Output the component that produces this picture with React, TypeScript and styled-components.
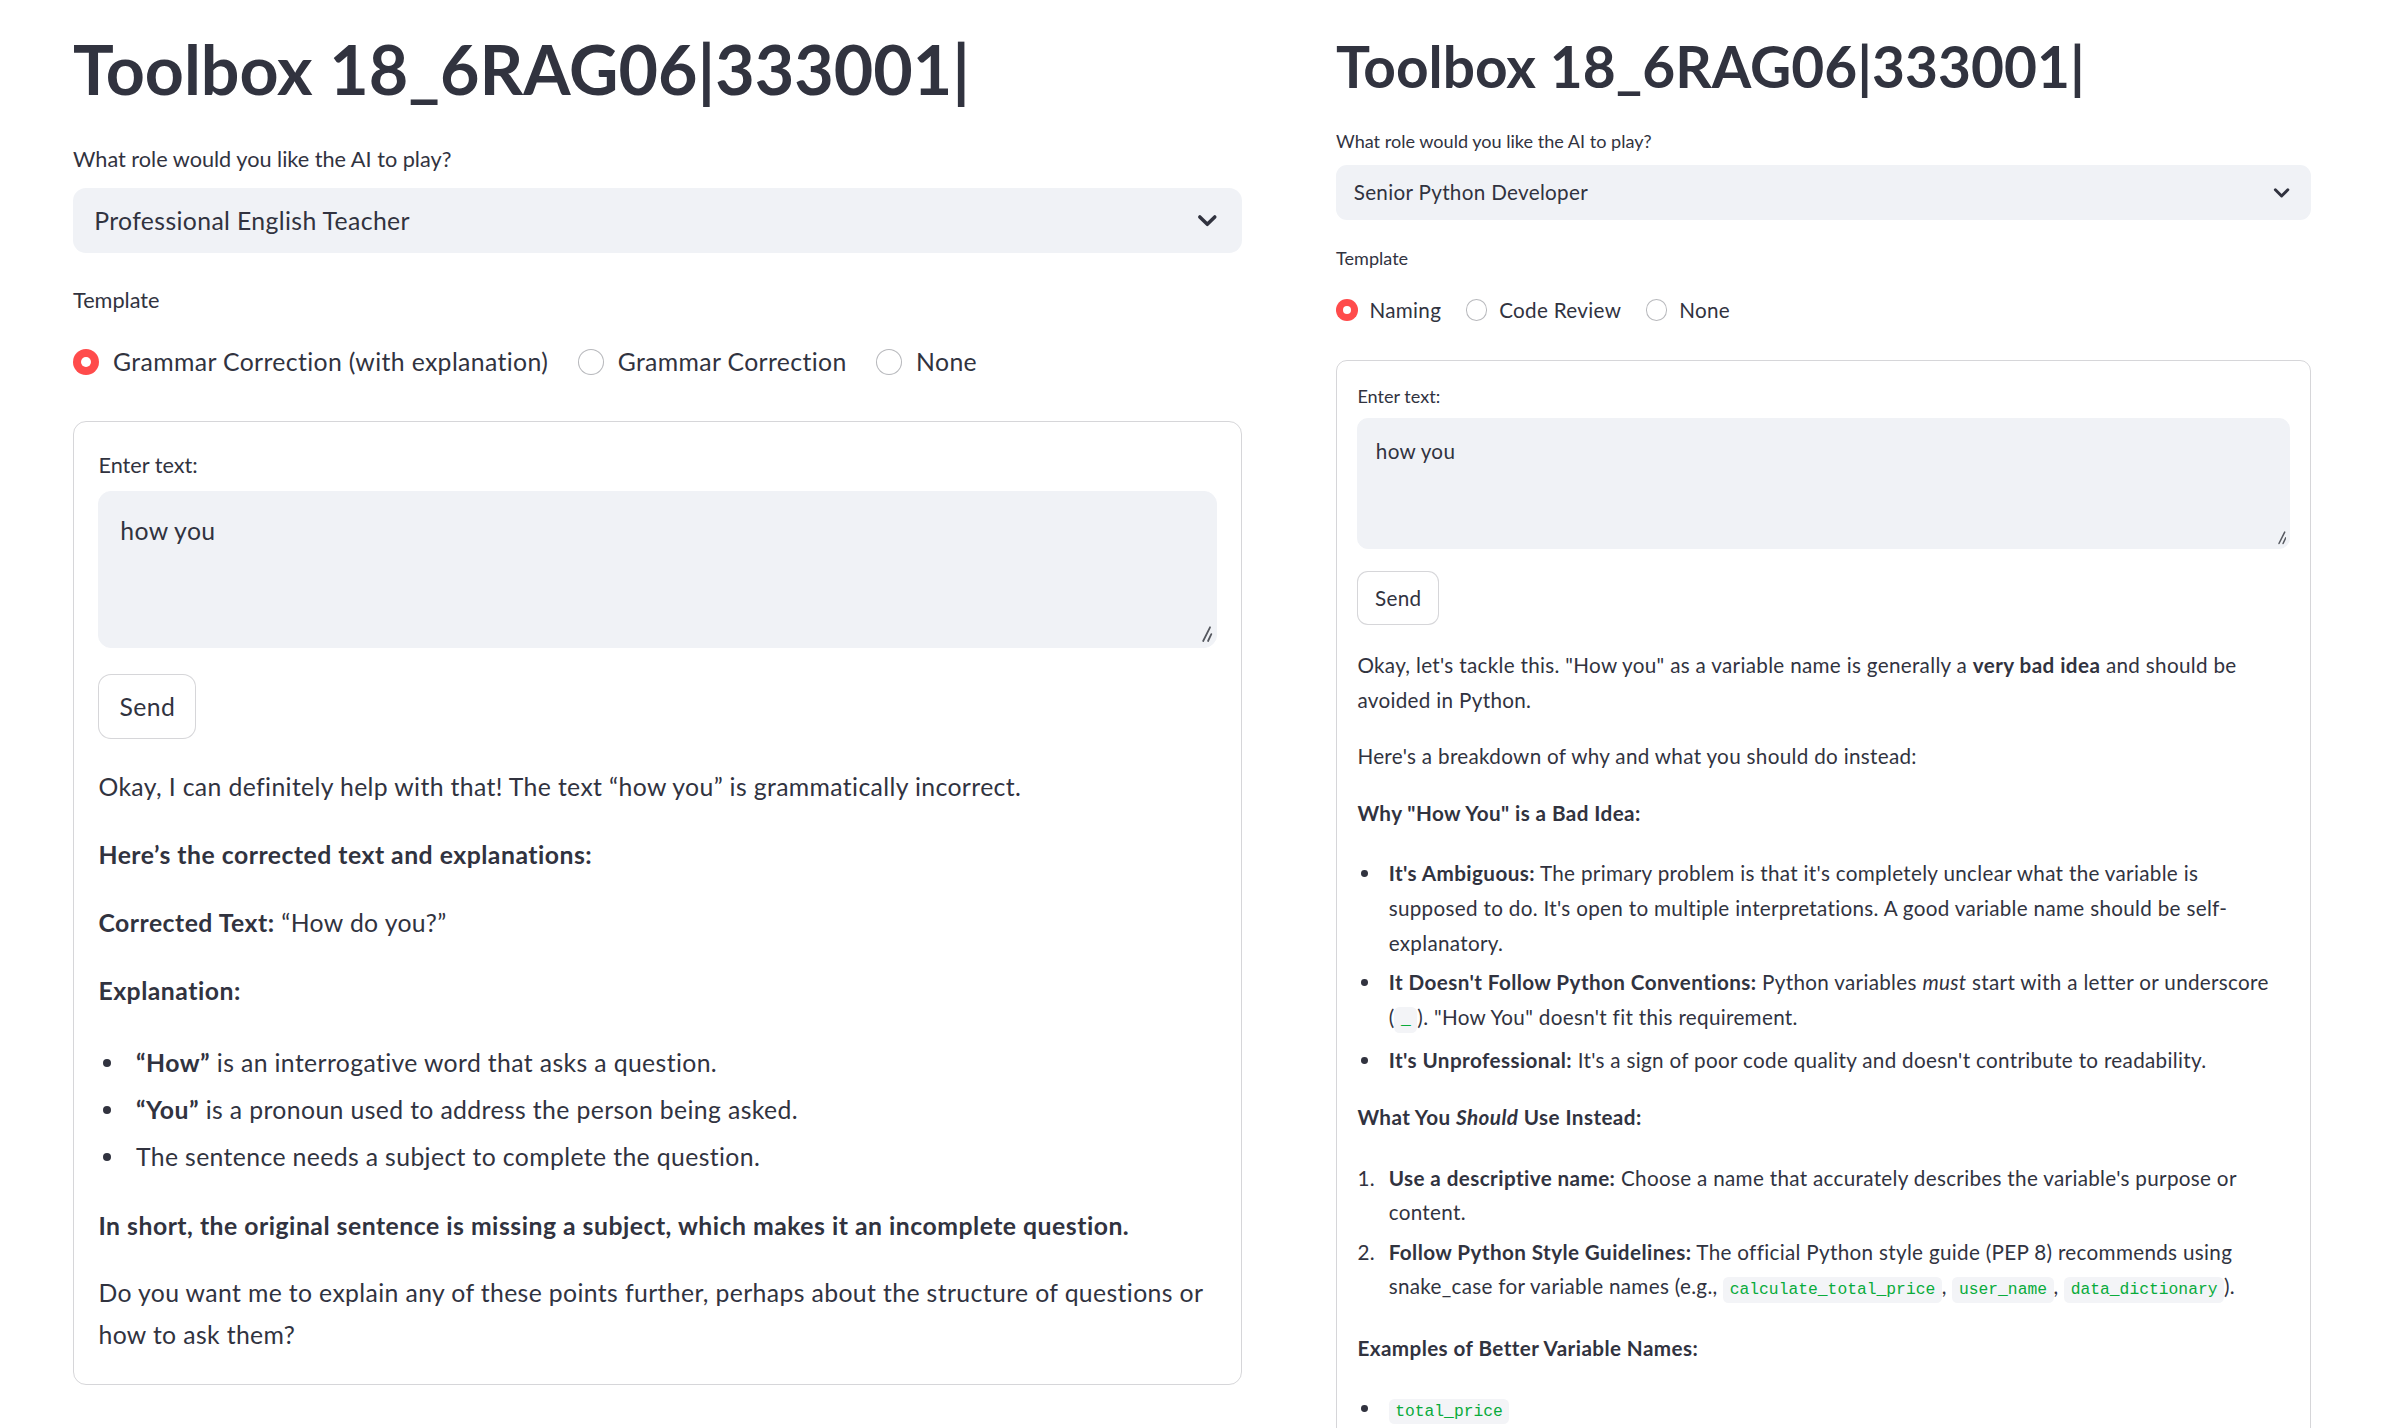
import React from "react";
import styled, { createGlobalStyle, css } from "styled-components";

const FONT = `Lato, "Noto Sans", "Liberation Sans", sans-serif`;
const MONO = `"Liberation Mono", "DejaVu Sans Mono", monospace`;
const INK = "#31333F";
const FS = 0.95; // Lato size factor vs. the original face
const LS = "0.015em";
const LS_BOLD = "0.02em";

type S = { $s: number };
const px = (v: number) => (p: S) => `${(v * p.$s).toFixed(2)}px`;

const Global = createGlobalStyle`
  html, body { margin: 0; padding: 0; background: #fff; overflow: hidden; }
  body { font-family: ${FONT}; color: ${INK}; }
  #root { width: 2398px; height: 1428px; overflow: hidden; }
`;

const Page = styled.main`
  display: flex;
  align-items: flex-start;
  gap: 94px;
  padding-left: 73px;
`;

const Panel = styled.section<S & { $w: number; $top: number }>`
  width: ${(p) => p.$w}px;
  flex: none;
  display: flex;
  flex-direction: column;
  padding-top: ${(p) => (p.$top * p.$s).toFixed(2)}px;
`;

const Title = styled.h1<S>`
  margin: 0;
  font-size: ${px(44 * FS)};
  line-height: ${px(52)};
  font-weight: 700;
  letter-spacing: 0;
  color: ${INK};
  white-space: nowrap;
`;

const FieldLabel = styled.div<S & { $mt: number }>`
  margin-top: ${(p) => (p.$mt * p.$s).toFixed(2)}px;
  font-size: ${px(14 * FS)};
  line-height: ${px(20)};
  color: ${INK};
`;

const Select = styled.div<S>`
  margin-top: ${px(7.3)};
  height: ${px(40)};
  box-sizing: border-box;
  display: flex;
  align-items: center;
  justify-content: space-between;
  padding: 0 ${px(11.5)} 0 ${px(13)};
  background: #f0f2f6;
  border-radius: ${px(8)};
  font-size: ${px(16 * FS)};
  letter-spacing: ${LS};
  color: ${INK};
  svg {
    width: ${px(20)};
    height: ${px(20)};
  }
`;

const RadioGroup = styled.div<S>`
  margin-top: ${px(16)};
  height: ${px(24)};
  display: flex;
  align-items: center;
  gap: ${px(18)};
`;

const RadioItem = styled.label<S>`
  display: flex;
  align-items: center;
  gap: ${px(8.6)};
  font-size: ${px(16 * FS)};
  line-height: ${px(24)};
  letter-spacing: ${LS};
  color: ${INK};
  white-space: nowrap;
`;

const RadioMark = styled.span<S & { $on: boolean }>`
  flex: none;
  box-sizing: border-box;
  width: ${px(16)};
  height: ${px(16)};
  border-radius: 50%;
  display: flex;
  align-items: center;
  justify-content: center;
  ${(p) =>
    p.$on
      ? css`
          background: #ff4b4b;
          &::after {
            content: "";
            width: ${(6 * p.$s).toFixed(2)}px;
            height: ${(6 * p.$s).toFixed(2)}px;
            border-radius: 50%;
            background: #fff;
          }
        `
      : css`
          background: #fff;
          border: 1px solid rgba(49, 51, 63, 0.35);
        `}
`;

const Form = styled.div<S>`
  margin-top: ${px(24.3)};
  border: 1px solid rgba(49, 51, 63, 0.2);
  border-radius: ${px(8)};
  padding: ${px(16.5)} ${px(15)} ${px(17)} ${px(15)};
  display: flex;
  flex-direction: column;
  align-items: stretch;
`;

const TextAreaWrap = styled.div<S>`
  position: relative;
  margin-top: ${px(6)};
`;

const TextArea = styled.textarea<S>`
  display: block;
  box-sizing: border-box;
  width: 100%;
  height: ${px(96)};
  margin: 0;
  padding: ${px(11)} ${px(12.8)};
  background: #f0f2f6;
  border: 1px solid #f0f2f6;
  border-radius: ${px(8)};
  font-family: ${FONT};
  font-size: ${px(16 * FS)};
  line-height: ${px(25.6)};
  letter-spacing: ${LS};
  color: ${INK};
  resize: none;
  outline: none;
`;

const Grip = styled.svg<S>`
  position: absolute;
  right: ${px(2.5)};
  bottom: ${px(3)};
  width: ${px(10)};
  height: ${px(10)};
  pointer-events: none;
`;

const SendButton = styled.button<S>`
  align-self: flex-start;
  margin-top: ${px(16.2)};
  width: ${px(60)};
  height: ${px(40)};
  padding: 0;
  display: flex;
  align-items: center;
  justify-content: center;
  background: #fff;
  border: 1px solid rgba(49, 51, 63, 0.2);
  border-radius: ${px(8)};
  font-family: ${FONT};
  font-size: ${px(16 * FS)};
  letter-spacing: ${LS};
  color: ${INK};
`;

const Markdown = styled.div<S>`
  margin-top: ${px(16.5)};
  font-size: ${px(16 * FS)};
  line-height: ${px(25.6)};
  letter-spacing: ${LS};
  color: ${INK};
  strong {
    font-weight: 700;
    letter-spacing: ${LS_BOLD};
  }
  & > *:last-child {
    margin-bottom: 0;
  }
`;

const P = styled.p<S & { $bold?: boolean }>`
  margin: 0 0 ${px(16)};
  font-weight: ${(p) => (p.$bold ? 700 : 400)};
  letter-spacing: ${(p) => (p.$bold ? LS_BOLD : "inherit")};
`;

const List = styled.ul<S>`
  list-style: none;
  margin: 0 0 ${px(16.6)};
  padding: ${px(2.8)} 0 0;
`;

const Item = styled.li<S>`
  display: grid;
  grid-template-columns: ${px(23)} 1fr;
  margin: 0 0 ${px(3.2)};
`;

const Marker = styled.span<S>`
  height: ${px(25.6)};
  display: flex;
  align-items: center;
`;

const Dot = styled.span<S>`
  width: ${px(5)};
  height: ${px(5)};
  margin-left: ${px(2.5)};
  border-radius: 50%;
  background: ${INK};
`;

const Code = styled.code<S>`
  font-family: ${MONO};
  font-size: ${px(12)};
  color: rgb(9, 171, 59);
  background: #f3f4f7;
  border-radius: ${px(4)};
  padding: ${px(2.4)} ${px(4.8)};
  letter-spacing: 0;
`;

const Chevron = () => (
  <svg viewBox="0 0 24 24" fill="none">
    <path d="M6.5 9.5 12 15l5.5-5.5" stroke={INK} strokeWidth="2.6" strokeLinecap="round" strokeLinejoin="round" />
  </svg>
);

type PanelProps = {
  s: number;
  w: number;
  top: number;
  role: string;
  templates: string[];
  children: React.ReactNode;
};

const ToolboxPanel = ({ s, w, top, role, templates, children }: PanelProps) => (
  <Panel $s={s} $w={w} $top={top}>
    <Title $s={s}>Toolbox 18_6RAG06|333001|</Title>
    <FieldLabel $s={s} $mt={19.4}>What role would you like the AI to play?</FieldLabel>
    <Select $s={s}>
      <span>{role}</span>
      <Chevron />
    </Select>
    <FieldLabel $s={s} $mt={18.7}>Template</FieldLabel>
    <RadioGroup $s={s}>
      {templates.map((t, i) => (
        <RadioItem $s={s} key={t}>
          <RadioMark $s={s} $on={i === 0} />
          {t}
        </RadioItem>
      ))}
    </RadioGroup>
    <Form $s={s}>
      <FieldLabel $s={s} $mt={0}>Enter text:</FieldLabel>
      <TextAreaWrap $s={s}>
        <TextArea $s={s} defaultValue="how you" />
        <Grip $s={s} viewBox="0 0 10 10" fill="none">
          <path d="M8.6 0.8 4.4 9.2M9.4 5 7.4 9.2" stroke="#55585f" strokeWidth="1.1" strokeLinecap="round" />
        </Grip>
      </TextAreaWrap>
      <SendButton $s={s}>Send</SendButton>
      <Markdown $s={s}>{children}</Markdown>
    </Form>
  </Panel>
);

const Bullet = ({ s, children }: { s: number; children: React.ReactNode }) => (
  <Item $s={s}>
    <Marker $s={s}>
      <Dot $s={s} />
    </Marker>
    <span>{children}</span>
  </Item>
);

const Numbered = ({ s, n, children }: { s: number; n: number; children: React.ReactNode }) => (
  <Item $s={s}>
    <span>{n}.</span>
    <span>{children}</span>
  </Item>
);

const L = 1.63;
const R = 1.36;

export default function App() {
  return (
    <>
      <Global />
      <Page>
        <ToolboxPanel
          s={L}
          w={1169}
          top={16.6}
          role="Professional English Teacher"
          templates={["Grammar Correction (with explanation)", "Grammar Correction", "None"]}
        >
          <P $s={L}>Okay, I can definitely help with that! The text “how you” is grammatically incorrect.</P>
          <P $s={L} $bold>Here’s the corrected text and explanations:</P>
          <P $s={L}>
            <strong>Corrected Text:</strong> “How do you?”
          </P>
          <P $s={L} $bold>Explanation:</P>
          <List $s={L}>
            <Bullet s={L}>
              <strong>“How”</strong> is an interrogative word that asks a question.
            </Bullet>
            <Bullet s={L}>
              <strong>“You”</strong> is a pronoun used to address the person being asked.
            </Bullet>
            <Bullet s={L}>The sentence needs a subject to complete the question.</Bullet>
          </List>
          <P $s={L} $bold>
            In short, the original sentence is missing a subject, which makes it an incomplete question.
          </P>
          <P $s={L}>
            Do you want me to explain any of these points further, perhaps about the structure of questions or how to ask
            them?
          </P>
        </ToolboxPanel>

        <ToolboxPanel
          s={R}
          w={975}
          top={22.8}
          role="Senior Python Developer"
          templates={["Naming", "Code Review", "None"]}
        >
          <P $s={R}>
            Okay, let's tackle this. "How you" as a variable name is generally a <strong>very bad idea</strong> and should
            be avoided in Python.
          </P>
          <P $s={R}>Here's a breakdown of why and what you should do instead:</P>
          <P $s={R} $bold>Why "How You" is a Bad Idea:</P>
          <List $s={R}>
            <Bullet s={R}>
              <strong>It's Ambiguous:</strong> The primary problem is that it's completely unclear what the variable is
              supposed to do. It's open to multiple interpretations. A good variable name should be self-explanatory.
            </Bullet>
            <Bullet s={R}>
              <strong>It Doesn't Follow Python Conventions:</strong> Python variables <em>must</em> start with a letter or
              underscore (<Code $s={R}>_</Code>). "How You" doesn't fit this requirement.
            </Bullet>
            <Bullet s={R}>
              <strong>It's Unprofessional:</strong> It's a sign of poor code quality and doesn't contribute to readability.
            </Bullet>
          </List>
          <P $s={R} $bold>
            What You <em>Should</em> Use Instead:
          </P>
          <List $s={R}>
            <Numbered s={R} n={1}>
              <strong>Use a descriptive name:</strong> Choose a name that accurately describes the variable's purpose or
              content.
            </Numbered>
            <Numbered s={R} n={2}>
              <strong>Follow Python Style Guidelines:</strong> The official Python style guide (PEP 8) recommends using
              snake_case for variable names (e.g., <Code $s={R}>calculate_total_price</Code>,{" "}
              <Code $s={R}>user_name</Code>, <Code $s={R}>data_dictionary</Code>).
            </Numbered>
          </List>
          <P $s={R} $bold>Examples of Better Variable Names:</P>
          <List $s={R}>
            <Bullet s={R}>
              <Code $s={R}>total_price</Code>
            </Bullet>
          </List>
        </ToolboxPanel>
      </Page>
    </>
  );
}
